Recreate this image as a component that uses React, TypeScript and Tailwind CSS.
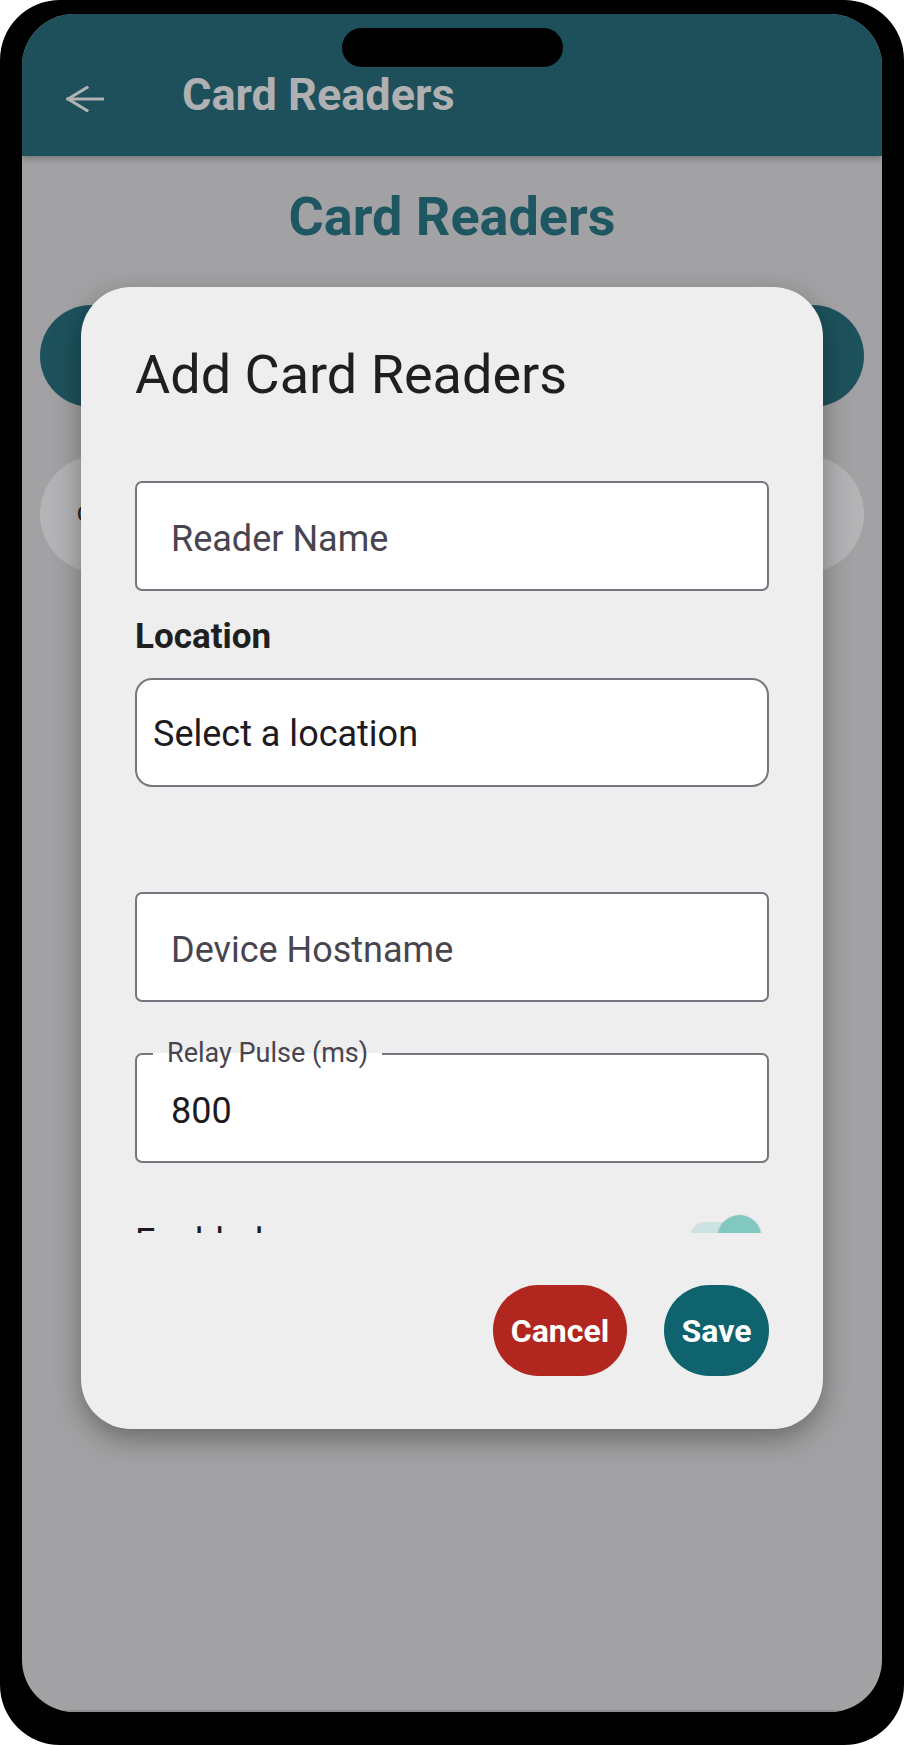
import React from "react";

function BackArrow() {
  return (
    <svg width="38" height="26" viewBox="0 0 38 26" fill="none" stroke="#b2b2b4" strokeWidth="3" strokeLinecap="square">
      <path d="M21 1.5 L2 13 L21 24.5" />
      <path d="M2 13 H37" />
    </svg>
  );
}

function TextBox({ placeholder }: { placeholder: string }) {
  return (
    <div className="flex h-[110px] items-center rounded-[7px] border-2 border-[#79747e] bg-white pl-[34px] pt-[6px]">
      <span className="text-[36px] leading-none text-[#49454f]">{placeholder}</span>
    </div>
  );
}

function AddReaderModal() {
  return (
    <div className="absolute left-[59px] top-[273px] flex h-[1142px] w-[742px] flex-col rounded-[50px] bg-[#eeeeee] px-[54px] shadow-[0_10px_28px_rgba(0,0,0,0.35)]">
      <h2 className="pt-[61px] text-[54px] leading-none text-[#1f1f1f]">Add Card Readers</h2>

      <div className="h-[831px] overflow-hidden pt-[79px]">
        <TextBox placeholder="Reader Name" />

        <p className="mt-[28px] text-[35px] font-bold leading-none text-[#1f1f1f]">Location</p>

        <div className="mt-[24px] flex h-[109px] items-center rounded-[17px] border-2 border-[#79747e] bg-white pl-[16px] pt-[2px]">
          <span className="text-[36px] leading-none text-[#1d1b20]">Select a location</span>
        </div>

        <div className="mt-[105px]">
          <TextBox placeholder="Device Hostname" />
        </div>

        <div className="relative mt-[51px] flex h-[110px] items-center rounded-[7px] border-2 border-[#79747e] bg-white pl-[34px] pt-[6px]">
          <span className="absolute -top-[15px] left-[16px] bg-[linear-gradient(to_bottom,#eeeeee_50%,#ffffff_50%)] px-[14px] text-[27px] leading-none text-[#49454f]">
            Relay Pulse (ms)
          </span>
          <span className="text-[36px] leading-none text-[#1d1b20]">800</span>
        </div>

        <div className="mt-[61px] flex items-start justify-between">
          <span className="text-[36px] leading-none text-[#1d1b20]">Enabled</span>
          <div className="relative mr-[8px] -mt-[9px] h-[43px] w-[71px]">
            <div className="absolute left-0 top-[7px] h-[30px] w-[62px] rounded-full bg-[#cde3e1]" />
            <div className="absolute right-0 top-0 h-[43px] w-[43px] rounded-full bg-[#80c8c0] shadow-[0_1px_3px_rgba(0,0,0,0.2)]" />
          </div>
        </div>
      </div>

      <div className="mt-[52px] flex justify-end gap-[37px]">
        <button type="button" className="flex h-[91px] w-[134px] items-center justify-center rounded-full bg-[#b1261e] text-[32px] font-bold leading-none text-white">
          Cancel
        </button>
        <button type="button" className="flex h-[91px] w-[105px] items-center justify-center rounded-full bg-[#0f636e] text-[32px] font-bold leading-none text-white">
          Save
        </button>
      </div>
    </div>
  );
}

export default function App() {
  return (
    <div className="h-[1745px] w-[904px] bg-white font-['Roboto',sans-serif]">
      <div className="h-full w-full rounded-[60px] bg-black px-[22px] pb-[33px] pt-[14px]">
        <div className="relative flex h-full flex-col overflow-hidden rounded-[52px] bg-[#a2a2a4]">
          <header className="relative z-10 h-[142px] shrink-0 bg-[#1d505a] shadow-[0_3px_6px_rgba(0,0,0,0.25)]">
            <div className="absolute left-[320px] top-[14px] h-[39px] w-[221px] rounded-full bg-black" />
            <div className="flex items-start pl-[44px] pt-[58px]">
              <div className="mt-[14px]">
                <BackArrow />
              </div>
              <h1 className="ml-[78px] text-[45px] font-bold leading-none text-[#b0b0b2]">Card Readers</h1>
            </div>
          </header>

          <main className="flex flex-1 flex-col border-b-2 border-[#8e8e90]">
            <h1 className="pt-[34px] text-center text-[54px] font-bold leading-none text-[#1e5661]">Card Readers</h1>
            <div className="mx-[18px] mt-[61px] h-[102px] rounded-full bg-[#1d525c]" />
            <div className="mx-[18px] mt-[48px] flex h-[118px] items-center rounded-full bg-[#b4b4b6] pl-[37px]">
              <span className="text-[20px] font-medium text-[#2a2a2a]">Card Reader</span>
            </div>
          </main>

          <AddReaderModal />
        </div>
      </div>
    </div>
  );
}
